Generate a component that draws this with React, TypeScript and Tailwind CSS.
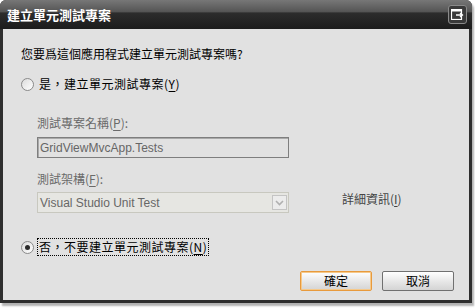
import React from 'react';

const cjk = { fontFamily: '"Noto Sans CJK TC", "Noto Sans CJK SC", sans-serif' };
const latin = { fontFamily: '"Liberation Sans", "Noto Sans CJK TC", sans-serif' };

const Key = ({ k }: { k: string }) => (
  <>
    (<span className="underline underline-offset-2">{k}</span>)
  </>
);

const Radio = ({ checked }: { checked?: boolean }) => (
  <span className="flex h-[13px] w-[13px] items-center justify-center rounded-full border border-[#8a8a8a] bg-gradient-to-br from-[#dcdcdc] to-white">
    {checked && <span className="h-[5px] w-[5px] rounded-full bg-[#2a2a2a]" />}
  </span>
);

const CloseIcon = () => (
  <svg width="13" height="11" viewBox="0 0 13 11">
    <rect x="0.5" y="0.5" width="10" height="10" fill="none" stroke="#fff" strokeWidth="1.2" />
    <rect x="0.5" y="0.5" width="10" height="2" fill="#fff" />
    <path d="M5 6 H11 M9 4 L11.5 6 L9 8" stroke="#fff" strokeWidth="1.3" fill="none" />
  </svg>
);

export default function App() {
  return (
    <div className="h-[308px] w-[475px] bg-white" style={cjk}>
      <div className="flex h-[303px] w-[472px] flex-col rounded-t-[6px] bg-[#2e2e2e] shadow-[2px_3px_2px_rgba(0,0,0,0.3)]">
        {/* Title bar */}
        <div className="flex h-[29px] items-center justify-between rounded-t-[6px] bg-[linear-gradient(to_bottom,#777_0%,#555_40%,#2c2c2c_45%,#1c1c1c_100%)] pl-[7px] pr-[5px]">
          <span className="text-[13px] font-bold leading-none text-white">建立單元測試專案</span>
          <div className="flex h-[19px] w-[19px] items-center justify-center rounded-[3px] border border-[#8a8a8a] bg-[#3a3a3a]">
            <CloseIcon />
          </div>
        </div>

        {/* Client area */}
        <div className="mx-[3px] mb-[3px] flex flex-1 flex-col bg-[#e1e1e1] px-[18px] pt-[17px] text-[12px] leading-[16px] text-black">
          <p>您要爲這個應用程式建立單元測試專案嗎?</p>

          <div className="mt-[14px] flex items-center gap-[5px]">
            <Radio />
            <span className="tracking-[0.5px]">是，建立單元測試專案<Key k="Y" /></span>
          </div>

          <div className="ml-[16px] flex flex-col text-[#6a6a6a]">
            <span className="mt-[23px]">測試專案名稱<Key k="P" />:</span>
            <div className="mt-[6px] flex h-[21px] w-[252px] items-center border border-[#7e7e7e] px-[2px] text-[12px] text-[#666] shadow-[inset_1px_1px_0_#a9a9a9]" style={latin}>
              GridViewMvcApp.Tests
            </div>

            <span className="mt-[13px]">測試架構<Key k="F" />:</span>
            <div className="mt-[5px] flex items-start">
              <div className="flex h-[21px] w-[252px] items-center justify-between border border-[#c8c8bf] bg-[#e6e6e2] pl-[2px] pr-[1px]">
                <span className="text-[12px] text-[#666]" style={latin}>Visual Studio Unit Test</span>
                <span className="flex h-[15px] w-[15px] items-center justify-center border border-[#c4c4c4] bg-[#ececec]">
                  <svg width="9" height="6" viewBox="0 0 9 6">
                    <path d="M1 1 L4.5 4.5 L8 1" stroke="#b0b0b0" strokeWidth="1.6" fill="none" />
                  </svg>
                </span>
              </div>
              <span className="ml-[53px] mt-[-1px] text-[#444]">詳細資訊<Key k="I" /></span>
            </div>
          </div>

          <div className="mt-[25px] flex items-center gap-[3px]">
            <Radio checked />
            <span className="border border-dotted border-black px-[1px] tracking-[0.5px]">否，不要建立單元測試專案<Key k="N" /></span>
          </div>

          <div className="-mr-[3px] mt-[15px] flex justify-end gap-[10px]">
            <button className="h-[20px] w-[72px] rounded-[2px] border border-[#e89a3c] bg-[linear-gradient(to_bottom,#fff,#e8e8e8_50%,#d4d4d4)] text-[12px] leading-none text-black shadow-[inset_0_0_0_1px_#f6c98a]">確定</button>
            <button className="h-[20px] w-[72px] rounded-[2px] border border-[#707070] bg-[linear-gradient(to_bottom,#fff,#e8e8e8_50%,#d4d4d4)] text-[12px] leading-none text-black">取消</button>
          </div>
        </div>
      </div>
    </div>
  );
}
